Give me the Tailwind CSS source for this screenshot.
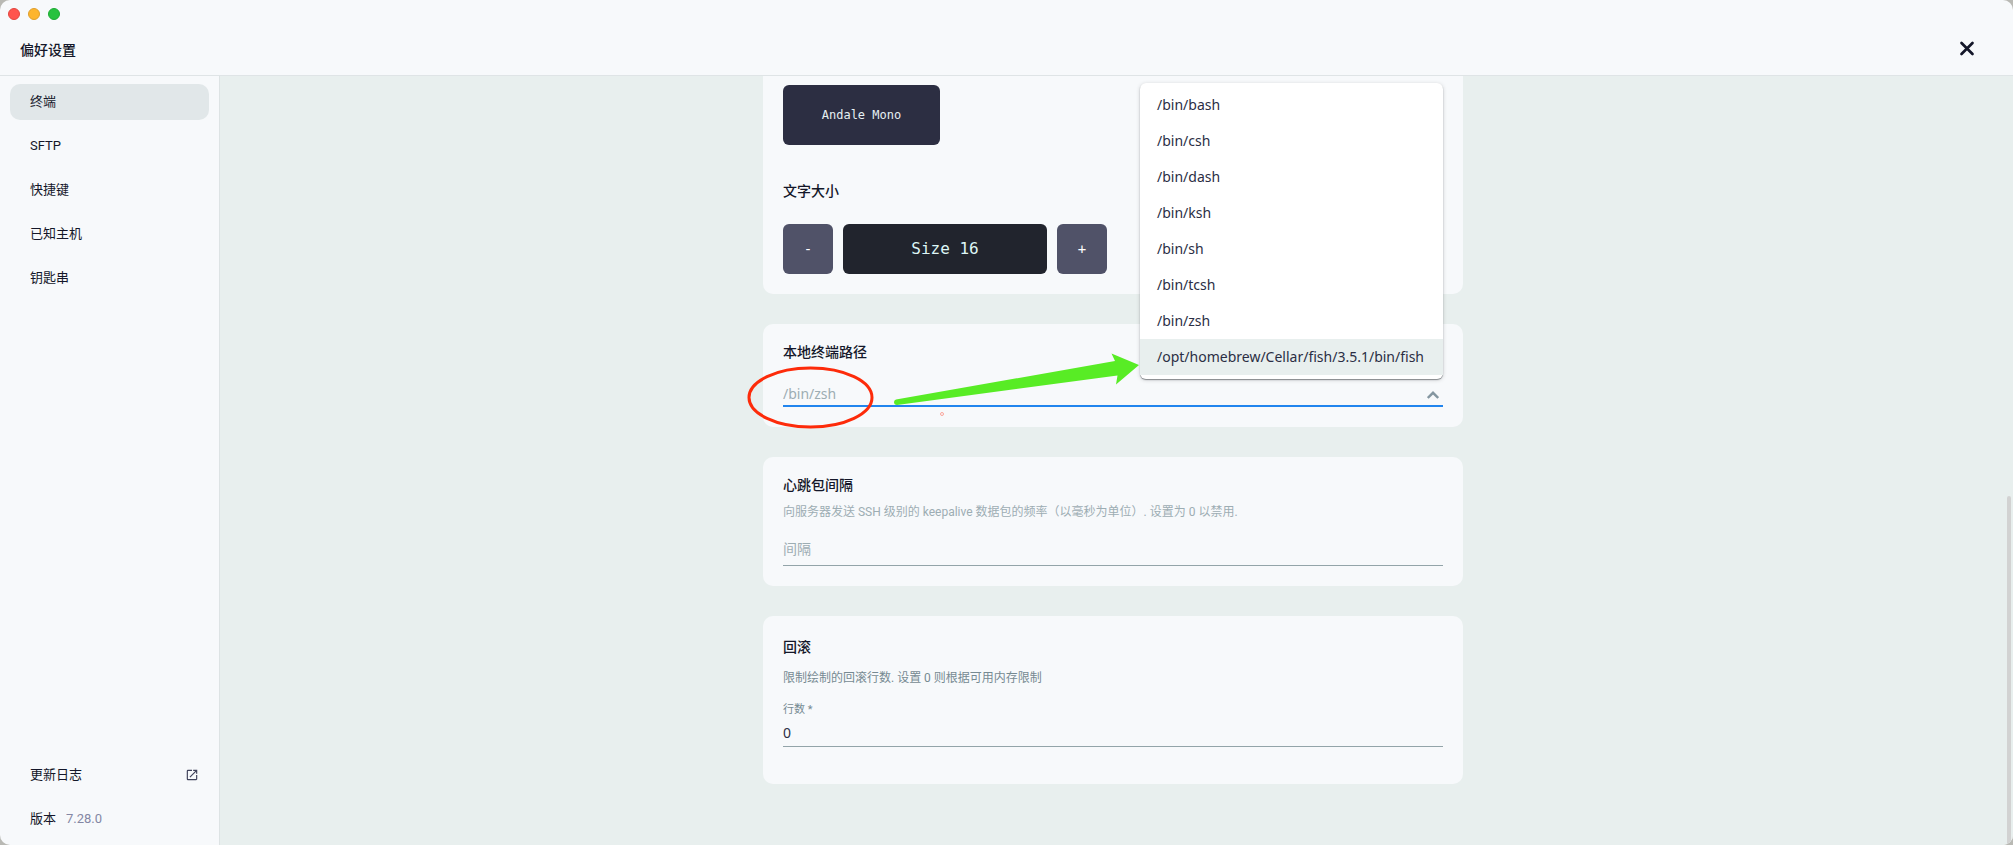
<!DOCTYPE html>
<html lang="zh-CN">
<head>
<meta charset="utf-8">
<title>偏好设置</title>
<script src="https://cdn.jsdelivr.net/npm/@tailwindcss/browser@4"></script>
</head>
<body class="h-screen overflow-hidden bg-[#b9b9b4] font-['Roboto','Noto_Sans_CJK_SC',sans-serif] text-[#141729]">
<div class="flex h-screen flex-col overflow-hidden rounded-[10px] bg-[#f7f9fb]">

  <header class="flex flex-col border-b border-[#dfe4e6]">
    <div class="flex h-7 items-center gap-2 px-2">
      <button type="button" aria-label="关闭窗口" class="size-3 rounded-full border border-[#e2463f] bg-[#ff544d]"></button>
      <button type="button" aria-label="最小化" class="size-3 rounded-full border border-[#df9f2c] bg-[#fdb52e]"></button>
      <button type="button" aria-label="全屏" class="size-3 rounded-full border border-[#1dab33] bg-[#27c23f]"></button>
    </div>
    <div class="flex h-[47px] items-center justify-between pr-9 pb-[3px] pl-5">
      <h1 class="text-sm font-medium">偏好设置</h1>
      <button type="button" aria-label="关闭" class="flex h-10 items-start pt-[9px]">
        <svg class="size-5" viewBox="0 0 20 20" fill="none" stroke="currentColor" stroke-width="2.700" stroke-linecap="round"><path d="M4.500 4 L15.500 15 M15.500 4 L4.500 15"/></svg>
      </button>
    </div>
  </header>

  <div class="flex min-h-0 flex-1">
    <nav class="flex w-[220px] shrink-0 flex-col justify-between border-r border-[#dde3e4] px-[10px] py-2 text-[13px]">
      <div class="flex flex-col gap-2">
        <a href="#terminal" aria-current="page" class="flex h-9 items-center rounded-[10px] bg-[#e1e7e9] px-5">终端</a>
        <a href="#sftp" class="flex h-9 items-center rounded-[10px] px-5">SFTP</a>
        <a href="#shortcuts" class="flex h-9 items-center rounded-[10px] px-5">快捷键</a>
        <a href="#hosts" class="flex h-9 items-center rounded-[10px] px-5">已知主机</a>
        <a href="#keychain" class="flex h-9 items-center rounded-[10px] px-5">钥匙串</a>
      </div>
      <div class="flex flex-col gap-2">
        <a href="#changelog" class="flex h-9 items-center justify-between pr-[10px] pl-5">更新日志
          <svg class="size-[14px] text-[#3f425a]" viewBox="0 0 24 24" fill="currentColor"><path d="M19 19H5V5h7V3H5a2 2 0 0 0-2 2v14a2 2 0 0 0 2 2h14c1.100 0 2-.9 2-2v-7h-2v7zM14 3v2h3.590l-9.830 9.830 1.410 1.410L19 6.410V10h2V3h-7z"/></svg>
        </a>
        <p class="flex h-9 items-center gap-[10px] pl-5">版本 <span class="text-[#8487a4]">7.28.0</span></p>
      </div>
    </nav>

    <main class="flex min-w-0 flex-1 bg-[#e8efee]">
      <div class="flex flex-1 flex-col items-center gap-[30px] overflow-hidden">

        <section class="w-full max-w-[700px] rounded-b-[10px] bg-[#f7f9fb] px-5 pt-[9px] pb-5">
          <button type="button" class="flex h-[60px] w-[157px] items-center justify-center rounded-md bg-[#2c2e42] font-['DejaVu_Sans_Mono',monospace] text-xs text-[#e6f0f2]">Andale Mono</button>
          <h2 class="pt-9 text-sm leading-5 font-medium">文字大小</h2>
          <div class="flex gap-[10px] pt-[23px] font-['DejaVu_Sans_Mono',monospace]">
            <button type="button" aria-label="缩小" class="size-[50px] rounded-md bg-[#505268] text-sm text-white">-</button>
            <output class="flex w-[204px] items-center justify-center rounded-md bg-[#21242d] text-base text-[#def6f6]">Size 16</output>
            <button type="button" aria-label="放大" class="size-[50px] rounded-md bg-[#505268] text-sm text-white">+</button>
          </div>
        </section>

        <section class="relative w-full max-w-[700px] rounded-[10px] bg-[#f7f9fb] px-5 pt-[18px] pb-5">
          <h2 class="text-sm leading-5 font-medium"><label for="shell">本地终端路径</label></h2>
          <div class="flex h-[45px] items-end border-b-2 border-[#2185ee] pt-5">
            <input id="shell" role="combobox" aria-expanded="true" aria-controls="shells" placeholder="/bin/zsh" class="h-6 min-w-0 flex-1 font-['Noto_Sans','Noto_Sans_CJK_SC',sans-serif] text-sm outline-none placeholder:text-[#9dadb3]">
            <button type="button" aria-label="收起列表" class="flex size-5 items-center justify-center text-[#8496a0]">
              <svg class="h-2 w-3" viewBox="0 0 12 8" fill="none" stroke="currentColor" stroke-width="2.400"><path d="M.8 7 L6 1.800 L11.200 7"/></svg>
            </button>
          </div>
          <ul id="shells" role="listbox" aria-label="本地终端路径" class="absolute right-5 bottom-12 z-10 w-[303px] rounded-md bg-white py-1 font-['Noto_Sans','Noto_Sans_CJK_SC',sans-serif] text-sm text-[#2b2e44] shadow-[0_1px_1px_#85898c,0_1px_4px_#0000002e]">
            <li role="option" class="flex h-9 items-center px-[17px]">/bin/bash</li>
            <li role="option" class="flex h-9 items-center px-[17px]">/bin/csh</li>
            <li role="option" class="flex h-9 items-center px-[17px]">/bin/dash</li>
            <li role="option" class="flex h-9 items-center px-[17px]">/bin/ksh</li>
            <li role="option" class="flex h-9 items-center px-[17px]">/bin/sh</li>
            <li role="option" class="flex h-9 items-center px-[17px]">/bin/tcsh</li>
            <li role="option" class="flex h-9 items-center px-[17px]">/bin/zsh</li>
            <li role="option" aria-selected="true" class="flex h-9 items-center bg-[#e8efee] px-[17px]">/opt/homebrew/Cellar/fish/3.5.1/bin/fish</li>
          </ul>
          <svg class="pointer-events-none absolute inset-0 z-20 size-full overflow-visible" fill="none" aria-hidden="true">
            <ellipse cx="47.500" cy="73.500" rx="61.500" ry="29.500" stroke="#fd2b0a" stroke-width="3"/>
            <path d="M133 75.500 L352 37 L348.500 29.500 L376 41 L353 60.500 L354.500 51.500 L134 81 Q131 81 131 78 Q131 76 133 75.500Z" fill="#58ec25"/>
            <circle cx="179" cy="90" r="1.500" stroke="#fba69c"/>
          </svg>
        </section>

        <section class="w-full max-w-[700px] rounded-[10px] bg-[#f7f9fb] px-5 pt-[18px] pb-5">
          <h2 class="text-sm leading-5 font-medium"><label for="keepalive">心跳包间隔</label></h2>
          <p class="pt-2 text-xs leading-[18px] text-[#9dadb3]">向服务器发送 SSH 级别的 keepalive 数据包的频率（以毫秒为单位）. 设置为 0 以禁用.</p>
          <div class="flex border-b border-[#93a4a9] pt-3">
            <input id="keepalive" placeholder="间隔" class="h-8 min-w-0 flex-1 text-sm outline-none placeholder:text-[#9dadb3]">
          </div>
        </section>

        <section class="w-full max-w-[700px] rounded-[10px] bg-[#f7f9fb] px-5 pt-[21px] pb-[37px]">
          <h2 class="text-sm leading-5 font-medium">回滚</h2>
          <p class="pt-3 text-xs leading-[18px] text-[#768a92]">限制绘制的回滚行数. 设置 0 则根据可用内存限制</p>
          <div class="flex flex-col border-b border-[#93a4a9] pt-[15px]">
            <label for="rows" class="text-[11px] leading-4 text-[#768a92]">行数 *</label>
            <input id="rows" value="0" class="h-7 font-['Noto_Sans','Noto_Sans_CJK_SC',sans-serif] text-sm text-[#2b2e44] outline-none">
          </div>
        </section>
      </div>

      <div class="flex w-[7px] flex-col justify-end pr-[2px] pl-px" aria-hidden="true">
        <div class="h-[45.400%] rounded-t-sm bg-[#d2d2d2]"></div>
      </div>
    </main>
  </div>
</div>
</body>
</html>
